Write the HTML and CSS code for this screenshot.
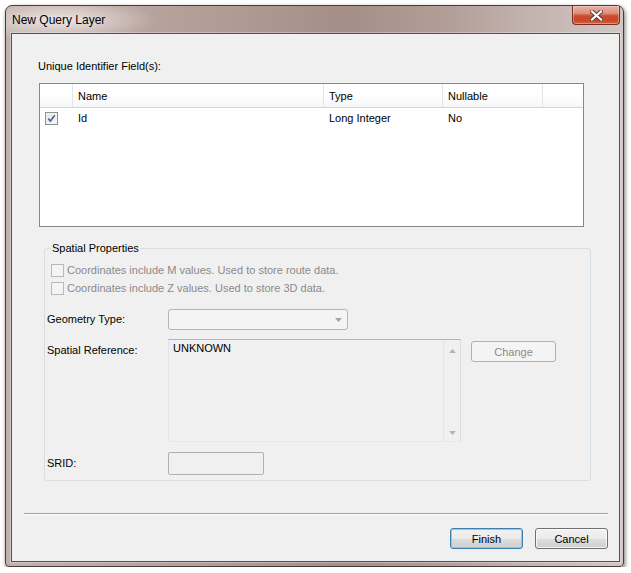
FILE: index.html
```html
<!DOCTYPE html>
<html>
<head>
<meta charset="utf-8">
<title>New Query Layer</title>
<link rel="stylesheet" href="styles.css">
</head>
<body>
<div class="window">
  <div class="titlebar">
    <span class="title">New Query Layer</span>
    <button class="close" aria-label="Close">
      <svg width="13" height="11" viewBox="0 0 13 11">
        <path d="M2 1.5 L11 9.5 M11 1.5 L2 9.5" stroke="#5a3a34" stroke-width="4" stroke-linecap="square"/>
        <path d="M2 1.5 L11 9.5 M11 1.5 L2 9.5" stroke="#ffffff" stroke-width="2.2" stroke-linecap="square"/>
      </svg>
    </button>
  </div>
  <div class="content">
    <div class="main">
      <div class="uid">Unique Identifier Field(s):</div>
      <div class="table">
        <div class="thead">
          <div class="th c0"></div>
          <div class="th c1">Name</div>
          <div class="th c2">Type</div>
          <div class="th c3">Nullable</div>
          <div class="th c4"></div>
        </div>
        <div class="tr">
          <div class="td c0">
            <span class="chk checked">
              <svg width="11" height="11" viewBox="0 0 11 11">
                <path d="M2.3 5.6 L4.4 8 L8.8 2.3" fill="none" stroke="#4b5f9e" stroke-width="1.6"/>
              </svg>
            </span>
          </div>
          <div class="td c1">Id</div>
          <div class="td c2">Long Integer</div>
          <div class="td c3">No</div>
        </div>
      </div>
      <fieldset class="group">
        <legend>Spatial Properties</legend>
        <div class="cbrow"><span class="chk off"></span><span>Coordinates include M values. Used to store route data.</span></div>
        <div class="cbrow"><span class="chk off"></span><span>Coordinates include Z values. Used to store 3D data.</span></div>
        <div class="frow geom">
          <span class="flabel">Geometry Type:</span>
          <div class="select">
            <svg width="7" height="4" viewBox="0 0 7 4"><path d="M0 0 H7 L3.5 4 Z" fill="#a3a3a3"/></svg>
          </div>
        </div>
        <div class="frow sref">
          <span class="flabel">Spatial Reference:</span>
          <div class="textbox">
            <div class="tbtext">UNKNOWN</div>
            <div class="vscroll">
              <svg width="7" height="4" viewBox="0 0 7 4"><path d="M0 4 H7 L3.5 0 Z" fill="#b4b4b4"/></svg>
              <svg width="7" height="4" viewBox="0 0 7 4"><path d="M0 0 H7 L3.5 4 Z" fill="#b4b4b4"/></svg>
            </div>
          </div>
          <button class="btn change" disabled>Change</button>
        </div>
        <div class="frow srid">
          <span class="flabel">SRID:</span>
          <div class="input"></div>
        </div>
      </fieldset>
    </div>
    <div class="footer">
      <div class="sep"></div>
      <div class="buttons">
        <button class="btn push default">Finish</button>
        <button class="btn push">Cancel</button>
      </div>
    </div>
  </div>
</div>
</body>
</html>
```

FILE: styles.css
```css
html, body {
  margin: 0;
  padding: 0;
  background: #ffffff;
}

body {
  font-family: "Liberation Sans", Arial, sans-serif;
  font-size: 11px;
  color: #000;
  padding-top: 5px;
  padding-left: 5px;
}

.window {
  width: 619px;
  height: 562px;
  box-sizing: border-box;
  border: 1px solid #453d3b;
  border-radius: 7px 7px 4px 4px;
  padding: 0 3px 4px 5px;
  display: flex;
  flex-direction: column;
  background:
    radial-gradient(ellipse 95px 22px at 55px 14px, rgba(238, 230, 228, 0.95), rgba(238, 230, 228, 0)),
    linear-gradient(90deg, #c2b1ac 0%, #b9a59f 20%, #ae9892 40%, #a58e88 55%, #b19c96 70%, #c4b4b0 86%, #d2c7c4 100%);
  box-shadow: 1px 2px 4px rgba(0, 0, 0, 0.55);
}

.titlebar {
  height: 27px;
  display: flex;
  align-items: center;
  justify-content: space-between;
}

.title {
  padding-left: 1px;
  font-size: 12px;
  color: #000;
  text-shadow: 0 0 6px rgba(255, 255, 255, 0.6);
}

.close {
  align-self: flex-start;
  width: 48px;
  height: 19px;
  margin: 0;
  padding: 0;
  border: 1px solid #7a2f22;
  border-top: none;
  border-radius: 0 0 4px 4px;
  background: linear-gradient(#eab0a2 0%, #e0907d 40%, #cd4b2e 55%, #c8482c 80%, #d2674c 100%);
  box-shadow: inset 0 0 0 1px rgba(255, 255, 255, 0.3);
  display: flex;
  align-items: center;
  justify-content: center;
}

.content {
  flex: 1;
  background: #f0f0f0;
  border: 1px solid #5a4d4a;
  display: flex;
  flex-direction: column;
  box-shadow: 0 0 0 1px rgba(255, 255, 255, 0.3);
}

.main {
  padding: 26px 0 0 27px;
}

.uid {
  margin-left: -1px;
  line-height: 13px;
}

.table {
  margin-top: 10px;
  width: 545px;
  height: 144px;
  box-sizing: border-box;
  border: 1px solid #828790;
  background: #fff;
}

.thead {
  display: flex;
  height: 24px;
  box-sizing: border-box;
  border-bottom: 1px solid #d5d5d5;
  background: linear-gradient(#ffffff 0%, #ffffff 45%, #f6f7f8 100%);
}

.th {
  box-sizing: border-box;
  border-right: 1px solid #e3e4e6;
  padding-left: 5px;
  line-height: 23px;
  padding-top: 1px;
}

.c0 { width: 33px; flex: none; box-sizing: border-box; }
.c1 { width: 251px; flex: none; box-sizing: border-box; }
.c2 { width: 119px; flex: none; box-sizing: border-box; }
.c3 { width: 100px; flex: none; box-sizing: border-box; }
.c4 { flex: 1; border-right: none; }

.tr {
  display: flex;
  height: 20px;
  align-items: center;
}

.td {
  padding-left: 5px;
  display: flex;
  align-items: center;
}

.chk {
  width: 13px;
  height: 13px;
  box-sizing: border-box;
  flex: none;
  display: flex;
  align-items: center;
  justify-content: center;
}

.chk.checked {
  border: 1px solid #8e8f8f;
  background: linear-gradient(135deg, #e3e3e3 0%, #f7f7f7 100%);
  box-shadow: inset 0 0 0 1px #f4f4f4;
}

.chk.off {
  border: 1px solid #b9b9b9;
  background: #f4f4f4;
  margin-right: 2px;
}

.group {
  margin: 14px 0 0 5px;
  width: 547px;
  min-width: 0;
  box-sizing: border-box;
  border: 1px solid #d5dfe5;
  border-radius: 3px;
  padding: 6px 6px 5px 6px;
}

.group legend {
  padding: 0 1px;
  line-height: 14px;
}

.cbrow {
  display: flex;
  align-items: center;
  height: 18px;
  color: #8a8a8a;
  gap: 1px;
}

.frow {
  display: flex;
}

.flabel {
  flex: none;
  width: 121px;
  margin-left: -4px;
  line-height: 13px;
}

.geom {
  margin-top: 12px;
  align-items: center;
}

.select {
  width: 180px;
  height: 21px;
  box-sizing: border-box;
  border: 1px solid #b5b5b5;
  border-radius: 3px;
  background: #f4f4f4;
  display: flex;
  align-items: center;
  justify-content: flex-end;
  padding-right: 5px;
}

.sref {
  margin-top: 9px;
  align-items: flex-start;
}

.sref .flabel {
  margin-top: 5px;
}

.textbox {
  width: 293px;
  height: 103px;
  box-sizing: border-box;
  border: 1px solid;
  border-color: #b0b3b8 #dbdfe6 #e3e9ef #e2e3ea;
  display: flex;
  background: #f0f0f0;
}

.tbtext {
  flex: 1;
  padding: 2px 0 0 4px;
  line-height: 13px;
  color: #000;
}

.vscroll {
  width: 17px;
  box-sizing: border-box;
  border-left: 1px solid #e4e4e4;
  display: flex;
  flex-direction: column;
  align-items: center;
  justify-content: space-between;
  padding: 9px 0 6px 1px;
}

.btn {
  font-family: "Liberation Sans", Arial, sans-serif;
  font-size: 11px;
  margin: 0;
  padding: 0;
  height: 21px;
  box-sizing: border-box;
  border-radius: 3px;
}

.change {
  width: 85px;
  margin-left: 10px;
  margin-top: 2px;
  border: 1px solid #adb2b5;
  background: #f4f4f4;
  color: #8b8b8b;
}

.srid {
  margin-top: 10px;
  align-items: center;
}

.input {
  width: 96px;
  height: 23px;
  box-sizing: border-box;
  border: 1px solid #b0b0b0;
  border-radius: 2px;
  background: #f0f0f0;
}

.footer {
  margin-top: auto;
  padding: 0 11px 12px 12px;
}

.sep {
  border-top: 1px solid #a0a0a0;
  border-bottom: 1px solid #ffffff;
}

.buttons {
  display: flex;
  justify-content: flex-end;
  gap: 12px;
  margin-top: 13px;
}

.push {
  width: 73px;
  color: #000;
  border: 1px solid #707070;
  background: linear-gradient(#f2f2f2 0%, #ebebeb 50%, #dddddd 51%, #cfcfcf 100%);
  box-shadow: inset 0 0 0 1px rgba(255, 255, 255, 0.75);
}

.push.default {
  border-color: #3c7fb1;
  box-shadow: inset 0 0 0 1px #7fd0f4;
}
```
